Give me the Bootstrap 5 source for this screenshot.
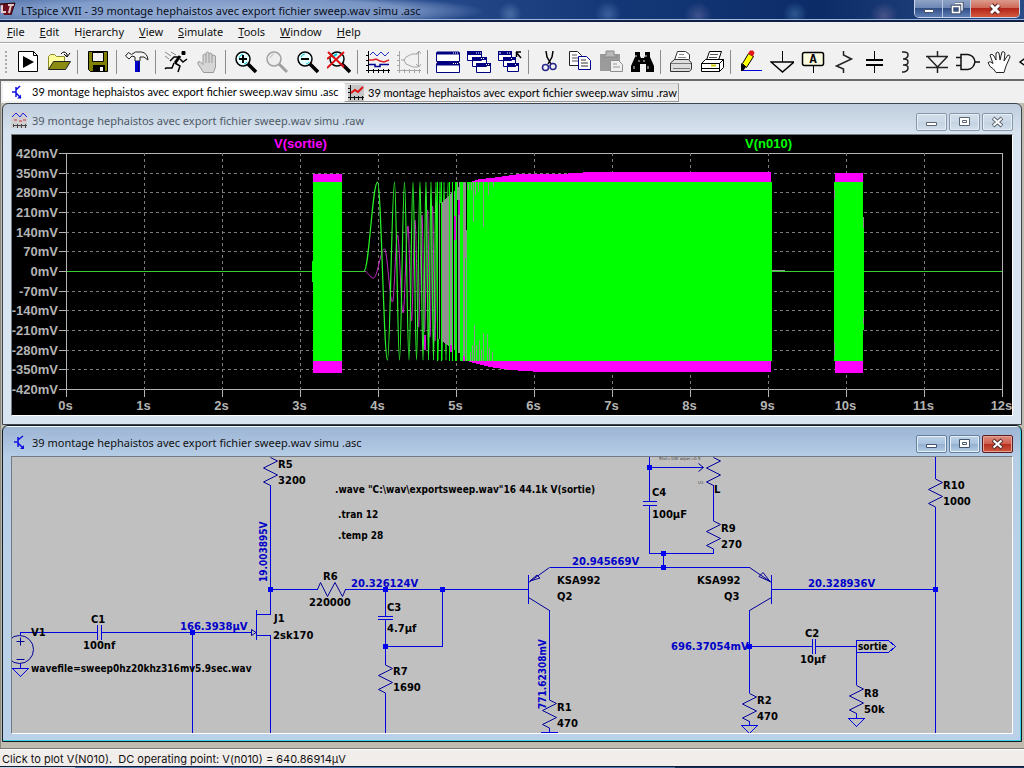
<!DOCTYPE html>
<html lang="en">
<head>
<meta charset="utf-8">
<meta name="viewport" content="width=device-width, initial-scale=1">
<title>LTspice XVII - 39 montage hephaistos avec export fichier sweep.wav simu .asc</title>
<link href="https://cdn.jsdelivr.net/npm/bootstrap@5.3.0/dist/css/bootstrap.min.css" rel="stylesheet">
<style>
body{font-family:"Noto Sans","Open Sans",sans-serif;font-size:11px;line-height:16px;color:#111;background:#f0f0f0;overflow-x:hidden}
.titlebar{height:22px;border-bottom:2px solid #101f45;box-shadow:inset 0 -1px #9db6dc;color:#0a0f1c;
 background:radial-gradient(ellipse 260px 18px at 225px 11px,#a3b9dce0 0,#8fa9d3c0 70%,#8fa9d300 100%),
 radial-gradient(circle 12px at 510px 14px,#6f97c580 0,#6f97c500 100%),radial-gradient(circle 13px at 608px 14px,#5f86bd80 0,#5f86bd00 100%),radial-gradient(circle 14px at 698px 16px,#6a70a880 0,#6a70a800 100%),radial-gradient(circle 12px at 795px 14px,#4f81b580 0,#4f81b500 100%),radial-gradient(circle 14px at 884px 16px,#7a6ea080 0,#7a6ea000 100%),
 linear-gradient(90deg,#5f7db2,#45659f 20%,#2a4d8f 38%,#143877 60%,#0c2c68 80%,#2a4c86)}
.titlebar svg,.tab-link svg,.frame-title svg{flex:none}
.syscap{height:18px;border:1px solid #c9d6ea;border-top:0;border-radius:0 0 5px 5px;overflow:hidden}
.syscap button{border:0;border-right:1px solid #b9c8e0;padding:0;width:28px;background:linear-gradient(#8fa3c6 0,#6f88b5 45%,#324f86 50%,#5d7eb5 100%);display:flex;align-items:center;justify-content:center}
.syscap .sys-close{width:48px;border:0;background:linear-gradient(#dc9a8c 0,#cf6a58 45%,#b3261a 50%,#d4593e 100%)}
.menubar{height:21px;border-bottom:1px solid #a5a5a5;padding-bottom:1px}
.menubar button{border:0;background:none;padding:0 8px 0 7px;line-height:19px;color:#111}
.toolbar{height:38px;background:#f1f1f1;border-top:1px solid #fff;border-bottom:2px solid #6b6b6b;padding-left:12px;overflow:hidden;position:relative}
.grip{position:absolute;left:5px;top:7px;bottom:5px;width:2px;background:repeating-linear-gradient(#aaa 0 2px,#f1f1f1 2px 4px)}
.toolbar button{flex:none;width:31px;height:34px;border:0;padding:0;background:none;display:flex;align-items:center;justify-content:center}
.toolbar .sep{flex:none;width:1px;height:24px;margin:0 4px 0 3px;background:#8c8c8c}
.tabstrip{height:22px;padding:2px 0 0 2px;background:#f0f0f0;border-left:1px solid #777}
.tab-link{font-family:Lato,sans-serif;height:18px;color:#000;text-decoration:none;white-space:nowrap;padding:0 4px 0 8px;gap:7px}
.tab-active{background:#fff;width:341px}
.tab-idle{background:linear-gradient(#e2e2e2,#f2f2f2);border:1px solid #999;border-top-color:#ccc;border-left-color:#fff;width:335px;padding:0 0 0 2px;gap:4px;height:19px}
.mdi{background:#bfbbae;padding:0 2px 5px 2px;box-shadow:inset 1px 0 #8b8b86}
.frame{border:1px solid #3c444d;border-radius:6px 6px 0 0;padding:0 8px}
.frame-raw{background:linear-gradient(#bfcddc 0,#d6e2ee 28px,#d8e4f0 60px);color:#4f5966;padding-bottom:8px}
.frame-asc{background:linear-gradient(#f4fafd 0 1px,#9cb5d4 1px,#b6cde6 30px,#b9d2ea 140px);border-color:#111c22;box-shadow:inset -1px -1px #3fd0e6;padding-bottom:7px}
.frame-title{height:30px;gap:4px;padding-top:3px}
.frame-title h2{font-size:11px;line-height:16px;margin:0;font-weight:400}
.capbtns{gap:2px;padding-top:2px}
.capbtns button{width:31px;height:18px;padding:0;border:1px solid #8796ab;border-radius:2px;background:linear-gradient(#d3deea,#cbd8e6 50%,#c3d1e1 50%,#d2deeb);box-shadow:inset 0 0 0 1px #e6eef6;display:flex;align-items:center;justify-content:center}
.frame-asc .capbtns button{border-color:#64809f;background:linear-gradient(#bfd3ea,#a9c2df 50%,#93afd0 50%,#b4cce6)}
.frame-asc .capbtns .cap-close{border-color:#5d1c1c;box-shadow:inset 0 0 0 1px #e3a397;background:linear-gradient(#dd8d80,#cd5c4c 50%,#b52e1e 50%,#cf5a40)}
.view{border:1px solid;border-color:#737a82 #fff #fff #737a82}
.view svg{display:block;width:100%;height:auto}
.plot{background:#000;font:bold 13px "Liberation Sans",Arial,sans-serif}
.sheet{background:#c0c0c0;font:bold 10px "DejaVu Sans",Verdana,sans-serif}
.sheet .narrow{font-family:"DejaVu Sans Condensed","DejaVu Sans",sans-serif}
.sheet .wire{stroke:#0000e0;fill:none}
.sheet .part{stroke:#00009a;fill:none}
.sheet .volt{fill:#0000c8}
.sheet .tiny{font:4px "DejaVu Sans",sans-serif;fill:#444}
.statusbar{font-family:Inter,sans-serif;height:19px;border-top:1px solid #777;box-shadow:inset 0 1px #fff;background:#f1edeb;padding:2px 0 0 2px;white-space:pre;border-bottom:1px solid #0d1b38}
.deskline{height:1px;background:linear-gradient(90deg,#c8d4e4 0 75px,#4d77a8 75px 675px,#16305c 675px)}
</style>
<script src="https://cdn.jsdelivr.net/npm/bootstrap@5.3.0/dist/js/bootstrap.bundle.min.js"></script>
</head>
<body class="d-flex flex-column min-vh-100">
<header class="titlebar d-flex align-items-start">
 <svg width="17" height="18" viewBox="0 0 17 18"><path d="M0 4l15-1-4 12H4z" fill="#6a0f1c"/><path d="M2 5v7h4M8 5h6M11 5l-2 8" stroke="#e7c8cf" stroke-width="2" fill="none"/><path d="M0 4l15-1-4 12" fill="none" stroke="#280610"/></svg>
 <span class="ps-1 pt-1 lh-sm text-nowrap">LTspice XVII - 39 montage hephaistos avec export fichier sweep.wav simu .asc</span>
 <div class="syscap d-flex ms-auto me-1">
  <button aria-label="Minimize"><svg width="14" height="12"><path d="M2.500 6.500h9v3h-9z" fill="#fff" stroke="#44546e"/></svg></button>
  <button aria-label="Restore"><svg width="14" height="13" fill="none"><path d="M5 1.500h7v7M2.500 4.500h7v6h-7z" stroke="#44546e" stroke-width="3.500"/><path d="M5 1.500h7v7M2.500 4.500h7v6h-7z" stroke="#fff" stroke-width="1.500"/></svg></button>
  <button class="sys-close" aria-label="Close"><svg width="14" height="12"><path d="M3 2l8 8M11 2l-8 8" stroke="#5a2020" stroke-width="5"/><path d="M3 2l8 8M11 2l-8 8" stroke="#fff" stroke-width="3"/></svg></button>
 </div>
</header>

<nav class="menubar d-flex" aria-label="Menu">
 <button><u>F</u>ile</button><button><u>E</u>dit</button><button>H<u>i</u>erarchy</button><button><u>V</u>iew</button><button><u>S</u>imulate</button><button><u>T</u>ools</button><button><u>W</u>indow</button><button><u>H</u>elp</button>
</nav>

<div class="toolbar d-flex align-items-center" role="toolbar" aria-label="Tools">
 <span class="grip"></span>
 <button aria-label="New"><svg width="24" height="24" viewBox="0 0 24 24"><path d="M2.500 1.500h15l4 4v16h-19z" fill="#fff" stroke="#000"/><path d="M17.500 1.500v4h4" fill="none" stroke="#000"/><path d="M7 6v12l11-6z"/></svg></button>
 <button aria-label="Open"><svg width="24" height="24" viewBox="0 0 24 24"><path d="M1.500 19.500V6.500l2-2h4l2 2h8v5" fill="#ffff9c" stroke="#8a8a28"/><path d="M1.500 19.500l5-8h17l-5 8z" fill="#8b8b12" stroke="#222"/><path d="M14 4q3-4 6 0v2M17 4l3 3 3-4" fill="none" stroke="#000"/></svg></button><span class="sep"></span>
 <button aria-label="Save"><svg width="24" height="24" viewBox="0 0 24 24"><path d="M2.500 1.500h19v20h-17l-2-2z" fill="#808000" stroke="#000"/><path d="M6.500 2.500h11v9h-11z" fill="#f1f1f1" stroke="#000"/><path d="M7 15h12v7H7z"/><path d="M14 17h3v4h-3z" fill="#f1f1f1"/></svg></button><span class="sep"></span>
 <button aria-label="Control panel"><svg width="24" height="24" viewBox="0 0 24 24"><path d="M.5 6l3-3.500 3 2 4-2.500h6q6 1 6.500 8l-4-3h-4v4h-5v-4l-3-1-3 3z" fill="#f4f4f4" stroke="#222"/><path d="M10 11h5v11h-5z" fill="#0000d0"/><path d="M13.500 11v11" stroke="#000070"/></svg></button><span class="sep"></span>
 <button aria-label="Run"><svg width="24" height="24" viewBox="0 0 24 24" fill="none" stroke="#000"><path d="M18 1.500h3v3h-3z" fill="#000"/><path d="M16 6l-5 7" stroke-width="3"/><path d="M15 7l-5 0-4 4M16 9l3 3 4-3M11 13l5 3-2 6M10 13l-2 5H2l-1 1" stroke-width="1.500"/><path d="M1 2l6 4M7 2l5 3M1 6l4 3" stroke="#888"/></svg></button>
 <button aria-label="Halt"><svg width="24" height="24" viewBox="0 0 24 24"><path d="M8.500 22.500L3 14v-2l2-.5 3 3V5q1.500-2 3 0V3q1.500-2 3 0v1q1.500-2 3 0v2q2-2 3.500 0v11l-2 5.500z" fill="#d6d6d6" stroke="#9a9a9a"/><path d="M11 5v8M14 4v9M17 6v7" stroke="#9a9a9a"/></svg></button><span class="sep"></span>
 <button aria-label="Zoom in"><svg width="24" height="24" viewBox="0 0 24 24"><circle cx="9" cy="9" r="7" fill="#e6ffff" stroke="#000" stroke-width="1.500"/><path d="M5 8q1-3 4-4M13 12q-1 2-3 2" stroke="#00c8d8" fill="none"/><path d="M9 5v8M5 9h8" stroke="#000" stroke-width="2"/><path d="M14 14l8 8" stroke="#000" stroke-width="3.500"/></svg></button>
 <button aria-label="Pan"><svg width="24" height="24" viewBox="0 0 24 24"><circle cx="9" cy="9" r="7" fill="#eee" stroke="#a0a0a0" stroke-width="1.500"/><path d="M5 8q1-3 4-4" stroke="#bbb" fill="none"/><path d="M14 14l8 8" stroke="#a0a0a0" stroke-width="3"/></svg></button>
 <button aria-label="Zoom out"><svg width="24" height="24" viewBox="0 0 24 24"><circle cx="9" cy="9" r="7" fill="#e6ffff" stroke="#000" stroke-width="1.500"/><path d="M5 7q1-3 4-3M13 12q-1 2-3 2" stroke="#00c8d8" fill="none"/><path d="M5 9h8" stroke="#000" stroke-width="2"/><path d="M14 14l8 8" stroke="#000" stroke-width="3.500"/></svg></button>
 <button aria-label="Zoom full"><svg width="24" height="24" viewBox="0 0 24 24"><circle cx="10" cy="9" r="7" fill="#e6ffff" stroke="#000" stroke-width="1.500"/><path d="M6 8q1-3 4-4" stroke="#00c8d8" fill="none" stroke-width="2"/><path d="M15 14l8 8" stroke="#000" stroke-width="3.500"/><path d="M1 2l16 15M17 2L0 18M0 9l4-3" stroke="#e01010" stroke-width="2"/></svg></button><span class="sep"></span>
 <button aria-label="Waveforms"><svg width="24" height="24" viewBox="0 0 24 24" fill="none"><path d="M2.500 1v22M0 20.500h24M0 5.500h3M0 10.500h3M0 15.500h3M7.500 19v4M12.500 19v4M17.500 19v4M22.500 19v4" stroke="#000"/><path d="M4 5l3-3 4 4 4-4 4 4 4-4" stroke="#2030c0"/><path d="M3 10h4l3-1 4 2 4 1 5-2" stroke="#e02020" stroke-width="1.500"/><path d="M3 14.500h6v2h5v-2h9" stroke="#000090" stroke-width="1.500"/></svg></button>
 <button aria-label="FFT"><svg width="24" height="24" viewBox="0 0 24 24" fill="none" stroke="#a6a6a6"><path d="M2.500 1v22M0 20.500h24M0 5.500h3M0 10.500h3M0 15.500h3M7.500 19v4M12.500 19v4M17.500 19v4M22.500 19v4M21.500 2v14M19 4l3-3 2 3M19 14l3 3 2-3M21 4h-6l-6 3-2 3 2 4 7 3h5M4 10h4"/></svg></button><span class="sep"></span>
 <button aria-label="Tile"><svg width="24" height="24" viewBox="0 0 24 24"><path d="M.5 2.500h23v9H.5zM.5 13.500h23v9H.5z" fill="#fff" stroke="#000080"/><path d="M1 1.500h22v3H1zM1 11.500h22v4H1z" fill="#000080"/><path d="M17 3h1M19 3h1M21 3h1M17 13.500h1M19 13.500h1M21 13.500h1" stroke="#fff"/></svg></button>
 <button aria-label="Cascade"><svg width="24" height="24" viewBox="0 0 24 24"><g fill="#fff" stroke="#000080"><path d="M.5 1.500h14v9H.5zM5.500 7.500h14v9h-14zM9.500 13.500h14v9h-14z"/></g><path d="M0 1h15v4H0zM5 7h15v3H5zM9 13h15v3H9z" fill="#000080"/><path d="M9 3h1M11 3h1M13 3h1M14 8.500h1M16 8.500h1M19 14.500h1M21 14.500h1" stroke="#fff"/></svg></button>
 <button aria-label="Close all"><svg width="24" height="24" viewBox="0 0 24 24"><g fill="#fff" stroke="#000080"><path d="M.5 1.500h13v9H.5zM5.500 7.500h12v9h-12zM9.500 13.500h11v8h-11z"/></g><path d="M0 1h14v4H0zM5 7h13v3H5zM9 13h12v3H9z" fill="#000080"/><path d="M1 3h2M9 3h1M11 3h1M13 8.500h1M17 14.500h1" stroke="#fff"/><path d="M18 2h5M18.500 2v5M18 2l5 6" stroke="#000" stroke-width="1.500"/></svg></button><span class="sep"></span>
 <button aria-label="Cut"><svg width="24" height="24" viewBox="0 0 24 24" fill="none"><path d="M9 1l1 6 4 7M16 1l-1 6-4 7" stroke="#000" stroke-width="1.500"/><circle cx="8.500" cy="17.500" r="3" stroke="#26268c" stroke-width="1.500"/><circle cx="16" cy="16.500" r="3" stroke="#26268c" stroke-width="1.500"/></svg></button>
 <button aria-label="Copy"><svg width="24" height="24" viewBox="0 0 24 24" fill="#fff"><path d="M1.500 1.500h8l4 4v10h-12z" stroke="#222"/><path d="M4 5h5M4 8h7M4 11h7" stroke="#555"/><path d="M10.500 6.500h8l4 4v9h-12z" stroke="#000090"/><path d="M13 10h5M13 13h7M13 16h7" stroke="#333"/></svg></button>
 <button aria-label="Paste"><svg width="24" height="24" viewBox="0 0 24 24"><path d="M1 4h20v17H1z" fill="#9b9b9b"/><path d="M7 1h8v4h3v2H4V5h3z" fill="#b8b8b8" stroke="#888"/><path d="M11.500 10.500h8l4 4v7h-12z" fill="#eee" stroke="#8e8e8e"/><path d="M14 14h4M14 17h7" stroke="#999"/></svg></button>
 <button aria-label="Find"><svg width="24" height="24" viewBox="0 0 24 24"><path d="M5 2h5v4l1 2h3l1-2V2h5v5l4 9v6h-8v-8h-6v8H1v-6l4-9z"/><path d="M6 5v2M16 5v2M4 16v3M18 16v3M9 10v2M14 10v2" stroke="#ddd"/></svg></button><span class="sep"></span>
 <button aria-label="Print preview"><svg width="24" height="24" viewBox="0 0 24 24"><path d="M5.500 10l3-8.500h8l4 3v5" fill="#fff" stroke="#333"/><path d="M10 4.500h5M9 7.500h8" stroke="#888"/><path d="M1.500 13l4-3.500h14l3 3.500v6l-2 2.500h-19z" fill="#ddd" stroke="#333"/><path d="M2 13.500h20M4 18.500h17" stroke="#777"/></svg></button>
 <button aria-label="Print"><svg width="24" height="24" viewBox="0 0 24 24" fill="#fff" stroke="#000"><path d="M6.500 10l3-8.500h12l-3 8.500"/><path d="M10 4.500h8M9 7.500h8" stroke="#555"/><path d="M1.500 13.500l4-4h18l-4 4zM1.500 13.500h18v8h-18zM19.500 13.500l4-4v8l-4 4z"/><path d="M2 18.500h17"/><path d="M11 15.500h5" stroke="#c9c900" stroke-width="2"/></svg></button><span class="sep"></span>
 <button aria-label="Wire"><svg width="24" height="24" viewBox="0 0 24 24"><path d="M3.500 13.500l6-10 5 3-7 11z" fill="#ffff00" stroke="#000"/><path d="M9 3.500l2-3h3l1.500 2-1.500 4z" fill="#e01818"/><path d="M2 13l5 4-3 4H2z"/><path d="M4 20.500h19" stroke="#0000d8"/></svg></button>
 <button aria-label="Ground"><svg width="24" height="24" viewBox="0 0 24 24" fill="none" stroke="#000"><path d="M12.500 1v11"/><path d="M1 12h23l-11.500 10z" stroke-width="1.500"/></svg></button>
 <button aria-label="Label net"><svg width="24" height="24" viewBox="0 0 24 24"><rect x="1.500" y="2.500" width="21" height="13" rx="2" fill="#fafae0" stroke="#000" stroke-width="1.500"/><text x="12" y="13" text-anchor="middle" font-family="Liberation Mono" font-weight="bold" font-size="12">A</text><path d="M12.500 16v7" stroke="#000"/></svg></button>
 <button aria-label="Resistor"><svg width="24" height="24" viewBox="0 0 24 24" fill="none" stroke="#222"><path d="M11.500 1v4l8 4-15 7 7 3v4" stroke-width="1.500"/></svg></button>
 <button aria-label="Capacitor"><svg width="24" height="24" viewBox="0 0 24 24" stroke="#000"><path d="M11.500 1v9M11.500 15v8"/><path d="M3 10h17M3 15h17" stroke-width="2"/></svg></button>
 <button aria-label="Inductor"><svg width="24" height="24" viewBox="0 0 24 24" fill="none" stroke="#222" stroke-width="1.500"><path d="M8 2h2q4 0 4 3t-4 4H9M10 9q4 0 4 3t-4 3H9M10 15q4 0 4 3t-4 4H8"/></svg></button>
 <button aria-label="Diode"><svg width="24" height="24" viewBox="0 0 24 24" fill="none" stroke="#222"><path d="M1 6.500h22M1 17.500h22M3 7l9.500 10L22 7M12.500 1v5M12.500 17v6" stroke-width="1.500"/></svg></button>
 <button aria-label="Component"><svg width="24" height="24" viewBox="0 0 24 24" fill="none" stroke="#111" stroke-width="1.500"><path d="M5 4.500h7q6 1 7 7-1 7-7 8H5zM0 7.500h5M0 15.500h5M19 12h5"/></svg></button>
 <button aria-label="Move"><svg width="24" height="24" viewBox="0 0 24 24"><path d="M9 22.500q-2-4-6-6l-2-4q2-2 5 1L3 5q2-2 4 1l2 4V3q2-2 3 0l1 7 2-8q2-1 3 1l-1 8 4-6q2 0 2 2l-4 9-2 6.500z" fill="#fff" stroke="#222"/></svg></button>
 <button aria-label="Drag"><svg width="24" height="24" viewBox="0 0 24 24"><path d="M2 12l5-3.500h8v7H7z" fill="#fff" stroke="#000" stroke-width="1.500"/></svg></button>
</div>

<nav class="tabstrip d-flex" aria-label="Documents">
 <a href="#asc" class="tab-link tab-active d-flex align-items-center"><svg width="14" height="18" viewBox="0 0 14 18"><path d="M1 9h4M5 4v10M5 7l4-4M5 10l5 5" fill="none" stroke="#1010e0" stroke-width="1.500"/><path d="M10 15.500H6l4-4z" fill="#1010e0"/></svg><span>39 montage hephaistos avec export fichier sweep.wav simu .asc</span></a>
 <a href="#raw" class="tab-link tab-idle d-flex align-items-center"><svg width="17" height="17" viewBox="0 0 17 17"><path d="M1 1h16v16H1z" fill="#c6c6c6"/><path d="M3.500 1v15M1 13.500h16M1 4.500h3M1 8.500h3M7.500 12v4M11.500 12v4M15.500 12v4" stroke="#111"/><path d="M4 9l4-3 3 2 5-5" fill="none" stroke="#e01010" stroke-width="2"/></svg><span>39 montage hephaistos avec export fichier sweep.wav simu .raw</span></a>
</nav>

<main class="mdi flex-grow-1">
 <section class="frame frame-raw" id="raw">
  <div class="frame-title d-flex align-items-center">
   <svg width="17" height="17" viewBox="0 0 17 17"><path d="M0 0h16v16H0z" fill="#cfcfd2"/><path d="M2 13.500h14M2.500 12v3M6.500 12v4M10.500 12v4M14.500 12v4" stroke="#444"/><path d="M1 5l4-4 4 4 3-4 4 4" fill="none" stroke="#2020e0"/><path d="M3 8h3M8 9h3M12 8h3" stroke="#d03030"/></svg>
   <h2>39 montage hephaistos avec export fichier sweep.wav simu .raw</h2>
   <div class="capbtns d-flex ms-auto">
    <button aria-label="Minimize"><svg width="13" height="12"><path d="M1.500 6.500h10v3h-10z" fill="#fff" stroke="#5b6672"/></svg></button>
    <button aria-label="Maximize"><svg width="13" height="12"><path d="M1.500 1.500h10v8h-10zM4.500 4.500h4v2h-4z" fill="#fff" stroke="#5b6672"/></svg></button>
    <button aria-label="Close"><svg width="13" height="12"><path d="M2 2l9 8M11 2l-9 8" stroke="#5b6672" stroke-width="4"/><path d="M2.500 2.500l8 7M10.500 2.500l-8 7" stroke="#fff" stroke-width="2"/></svg></button>
   </div>
  </div>
  <div class="view">
   <svg class="plot" viewBox="12 135 1000 280" role="img" aria-label="Waveform plot">
    <g id="grid" shape-rendering="crispEdges" stroke="#7c7c7c" fill="none"></g>
    <g id="ticks" fill="#b4b4b4"></g>
    <text x="274" y="148" fill="#f0f">V(sortie)</text>
    <text x="745" y="148" fill="#0f0">V(n010)</text>
    <g shape-rendering="crispEdges">
     <path d="M67 271h299v1H67zM772 271h230v1H772z" fill="#30d030"/>
     <path d="M772 270h13v1h-13z" fill="#999"/>
     <path d="M313 174h29v199h-29zM835 173h28v200h-28z" fill="#f0f"/>
     <path d="M313 182h29v179h-29zM312 261h1v21h-1zM834 182h29v179h-29zM863 220h1v110h-1z" fill="#0f0"/>
     <path d="M834.500 190v9M834.500 343v13M863.500 217v11M863.500 317v7M771.500 186v9M771.500 347v12" stroke="#888"/>
    </g>
    <g id="sweep" fill="none"></g>
   </svg>
  </div>
 </section>

 <section class="frame frame-asc" id="asc">
  <div class="frame-title d-flex align-items-center">
   <svg width="17" height="17" viewBox="0 0 17 17"><path d="M3 8h4M7 3v10M7 6l5-4M7 9l5 5" fill="none" stroke="#1010e0" stroke-width="1.500"/><path d="M13 15H9l4-4z" fill="#1010e0"/></svg>
   <h2>39 montage hephaistos avec export fichier sweep.wav simu .asc</h2>
   <div class="capbtns d-flex ms-auto">
    <button aria-label="Minimize"><svg width="13" height="12"><path d="M1.500 6.500h10v3h-10z" fill="#fff" stroke="#44546a"/></svg></button>
    <button aria-label="Maximize"><svg width="13" height="12"><path d="M1.500 1.500h10v8h-10zM4.500 4.500h4v2h-4z" fill="#fff" stroke="#44546a"/></svg></button>
    <button class="cap-close" aria-label="Close"><svg width="13" height="12"><path d="M2 2l9 8M11 2l-9 8" stroke="#53302f" stroke-width="4"/><path d="M2.500 2.500l8 7M10.500 2.500l-8 7" stroke="#fff" stroke-width="2"/></svg></button>
   </div>
  </div>
  <div class="view">
   <svg class="sheet" viewBox="12 457 1000 276" role="img" aria-label="Schematic">
    <defs>
     <path id="res" d="M0 0L7 3.500L-7 10.500L7 17.500L-7 24.500L0 28"/>
     <path id="gnd" d="M-8 0H8L0 8z"/>
     <rect id="node" x="-2.500" y="-2.500" width="5" height="5" fill="#0000f0" stroke="none"/>
    </defs>
    <g class="wire" shape-rendering="crispEdges">
     <path d="M270.500 485V614.500H257M270.500 589.500H318M345 589.500H528.500M385.500 589.500V616M385.500 620V665M385.500 693V733M442.500 589.500V646.500H385.500"/>
     <path d="M20.500 635V632.500H97M102 632.500H251M192.500 632.500V733M257 635.500H270.500V733"/>
     <path d="M649.500 457V501M649.500 505V553.500H713.500V549M713.500 485V521M649.500 467.500H703M663.500 553.500V567.500M549.500 567.500H749.500"/>
     <path d="M549.500 610V700M749.500 610V693M749.500 646.500H812M816 646.500H856.500M856.500 652V685M771.500 589.500H935.500M935.500 457V479M935.500 507V733"/>
     <path d="M856.500 640.500H888.500L895.500 646.500L888.500 652.500H856.500z"/>
     <path d="M377.500 616.500h15M377.500 619.500h15M97.500 625v15M101.500 625v15M642.500 501.500h14M642.500 505.500h14M812.500 639v15M815.500 639v15M256.500 610v30M528.500 575v29M771.500 575v29M541 732.500h17"/>
     <use href="#gnd" x="20.500" y="668.500"/><use href="#gnd" x="749.500" y="725.500"/><use href="#gnd" x="856.500" y="718.500"/>
     <path d="M20.500 663v5M749.500 721v4M856.500 713v5M549.500 728v4"/>
    </g>
    <g class="part">
     <use href="#res" x="270.500" y="457.500"/><use href="#res" x="385.500" y="665"/><use href="#res" x="549.500" y="700"/><use href="#res" x="749.500" y="693.500"/><use href="#res" x="856.500" y="685.500"/><use href="#res" x="935.500" y="479"/><use href="#res" x="713.500" y="521"/><use href="#res" x="713.500" y="457.500"/>
     <path d="M317.500 589.500L320.500 582.500L327.500 596.500L335 582.500L342.500 596.500L345.500 589.500"/>
     <circle cx="19.500" cy="649.500" r="14"/><path d="M16.500 641.500h8M20.500 637.500v8M16.500 659.500h8M251.500 629.500l4.500 3-4.500 3z"/>
     <path d="M528.500 582.500L549.500 567.500M528.500 597.500L549.500 610.500M530 581l7-6 3 3zM771.500 582.500L749.500 567.500M771.500 597.500L749.500 610.500M770 581.500l-11-5 4-4zM698.500 463.500l5 4-5 4"/>
    </g>
    <g class="wire"><use href="#node" x="270.500" y="589.500"/><use href="#node" x="385.500" y="589.500"/><use href="#node" x="442.500" y="589.500"/><use href="#node" x="385.500" y="646.500"/><use href="#node" x="192.500" y="632.500"/><use href="#node" x="649.500" y="467.500"/><use href="#node" x="663.500" y="553.500"/><use href="#node" x="663.500" y="567.500"/><use href="#node" x="749.500" y="646.500"/><use href="#node" x="935.500" y="589.500"/></g>
    <text x="278" y="468">R5</text><text x="278" y="484">3200</text><text x="323" y="580">R6</text><text x="309" y="606">220000</text>
    <text x="91" y="623">C1</text><text x="83" y="649">100nf</text><text x="31" y="636">V1</text><text x="274" y="622">J1</text><text x="273" y="639">2sk170</text>
    <text x="387" y="611">C3</text><text x="387" y="632">4.7µf</text><text x="393" y="675">R7</text><text x="393" y="691">1690</text>
    <text x="557" y="584">KSA992</text><text x="557" y="600">Q2</text><text x="557" y="711">R1</text><text x="557" y="727">470</text>
    <text x="652" y="496">C4</text><text x="652" y="518">100µF</text><text x="714" y="493">L</text><text x="721" y="532">R9</text><text x="721" y="548">270</text>
    <text x="697" y="584">KSA992</text><text x="724" y="600">Q3</text><text x="805" y="637">C2</text><text x="800" y="663">10µf</text><text x="757" y="704">R2</text><text x="757" y="720">470</text>
    <text x="864" y="697">R8</text><text x="864" y="713">50k</text><text x="943" y="489">R10</text><text x="943" y="505">1000</text>
    <g class="tiny"><text x="659" y="460">Rtot=10K wiper=0.5</text><text x="698" y="484">U1</text></g>
    <g class="narrow"><text x="31" y="672">wavefile=sweep0hz20khz316mv5.9sec.wav</text><text x="335" y="493">.wave "C:\wav\exportsweep.wav"16 44.1k V(sortie)</text><text x="338" y="518">.tran 12</text><text x="338" y="539">.temp 28</text><text x="858" y="650">sortie</text></g>
    <g class="volt"><text x="180" y="630">166.3938µV</text><text x="351" y="587">20.326124V</text><text x="572" y="565">20.945669V</text><text x="808" y="587">20.328936V</text><text x="671" y="650">696.37054mV</text>
     <text transform="translate(267 582) rotate(-90)" class="narrow">19.003895V</text><text transform="translate(546 709) rotate(-90)" class="narrow">771.62308mV</text></g>
   </svg>
  </div>
 </section>
</main>

<footer class="statusbar">Click to plot V(N010).  DC operating point: V(n010) = 640.86914µV</footer>
<div class="deskline"></div>

<script>
// Axes: 78 units per second, one grid row per 70 mV
const rows=[153,173,192,212,232,251,271,291,310,330,350,369,389];
let grid='',ticks='';
rows.forEach((y,i)=>{
  const edge=i===0||i===12;
  if(i!==6)grid+=`<path d="M66 ${y+.5}H1002" ${edge?'stroke="#b4b4b4"':'stroke-dasharray="3 3"'}/>`;
  grid+=`<path d="M59 ${y+.5}h7" stroke="#b4b4b4"/>`;
  ticks+=`<text x="58" y="${y+5}" text-anchor="end">${420-70*i}mV</text>`;
});
for(let s=0;s<=12;s++){
  const x=66.5+78*s, edge=s===0||s===12;
  grid+=`<path d="M${x} 153V390" ${edge?'stroke="#b4b4b4"':'stroke-dasharray="3 3"'}/><path d="M${x} 390v7" stroke="#b4b4b4"/>`;
  ticks+=`<text x="${x-1}" y="410" text-anchor="middle">${s}s</text>`;
}
document.getElementById('grid').innerHTML=grid;
document.getElementById('ticks').innerHTML=ticks;

// Frequency sweep: smooth curves through successive extrema, then solid bands
function curve(p){
  let d=`M${p[0][0]} ${p[0][1]}`;
  for(let i=1;i<p.length;i++){
    const [x0,y0]=p[i-1],[x1,y1]=p[i],k=(x1-x0)*.37;
    d+=`C${x0+k} ${y0} ${x1-k} ${y1} ${x1} ${y1}`;
  }
  return d;
}
const gx=[377.5,387.5,394.5,399.5,404.5,409,413,416.5,420,423,426,428.5,431,433.5,436,438,440,442,444,446,448];
const g=[[364,271],...gx.map((x,i)=>[x,i%2?360:182])];
const m=[[364,271],[373.5,278],[384.5,249],[392.5,302],[397.5,235],[403,313],[408,226],[411.5,321],[415,220],[418.5,327],[422,215],[424.5,332],[427.5,210],[430,337],[432.5,206],[435,341],[437,200]];
let s=`<path d="${curve(m)}" stroke="#c828c8"/><path d="${curve(g)}" stroke="#28f028" stroke-width="1.25"/>`;
s+='<g shape-rendering="crispEdges"><path d="M455 191L463 187L470 182L480 179L492 178L505 176L520 174L560 174L590 172H771V372L540 372L510 370L490 367L478 364L467 361H460z" fill="#f0f"/>';
const cols='gkykgyyyyyyygyygkyggkyygggyygkg';
[...cols].forEach((c,i)=>{
  const x=437.5+i, top=c==='g'?182:206-i*.9, bot=c==='g'?361:338+i*.7;
  const col={g:'#0f0',y:'#909090',k:'#000'}[c];
  s+=`<path d="M${x} ${top}V${bot}" stroke="${col}"/>`;
});
s+='<path d="M467 182H772V361H467z" fill="#0f0"/>';
[[465,182,258],[466,230,361],[468,184,190],[471,182,190],[473,182,222],[475,182,195],[478,182,192],[483,182,227],[488,182,195],[493,182,187],
 [457,182,200],[459,182,210],[463,182,188],[470,352,361],[472,345,361],[474,325,361],[476,345,361],[479,340,361],[481,350,361],[483,333,361],[487,334,361],[489,348,361],[492,352,361]]
 .forEach(([x,a,b])=>{s+=`<path d="M${x+.5} ${a}V${b}" stroke="#909090"/>`});
[[454,216,240],[458,200,215],[424,335,350],[450,345,352]].forEach(([x,a,b])=>{s+=`<path d="M${x+.5} ${a}V${b}" stroke="#d010d0" stroke-width="2"/>`});
document.getElementById('sweep').innerHTML=s+'</g>';
</script>
</body>
</html>
